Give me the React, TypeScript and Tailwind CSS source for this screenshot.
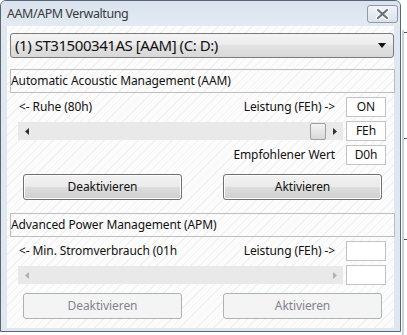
import React from "react"

const font = "font-['Noto_Sans',sans-serif] tracking-[-0.1px]"

function ValueBox({ value }: { value?: string }) {
    return (
        <div className="w-[40px] h-[20px] border border-[#c3c3c3] bg-white flex items-center justify-center text-[12px] text-[#111]">
            {value}
        </div>
    )
}

function Arrow({ dir, disabled }: { dir: "l" | "r"; disabled?: boolean }) {
    return (
        <div className="w-[17px] h-full flex items-center justify-center">
            <svg width="4" height="7" viewBox="0 0 4 7">
                {dir === "l" ? (
                    <path d="M4 0 L0 3.5 L4 7 Z" fill={disabled ? "#b0b0b0" : "#303030"} />
                ) : (
                    <path d="M0 0 L4 3.5 L0 7 Z" fill={disabled ? "#b0b0b0" : "#303030"} />
                )}
            </svg>
        </div>
    )
}

function ScrollBar({ thumb, disabled }: { thumb?: boolean; disabled?: boolean }) {
    return (
        <div className="w-[325px] h-[18px] bg-[#e9e9e9] flex items-stretch">
            <Arrow dir="l" disabled={disabled} />
            <div className="flex-1 flex items-center justify-end">
                {thumb && (
                    <div className="w-[16px] h-[17px] rounded-[2px] border border-[#9f9f9f] bg-gradient-to-b from-[#f4f4f4] to-[#d8d8d8]" />
                )}
            </div>
            <Arrow dir="r" disabled={disabled} />
        </div>
    )
}

function Button({ label, disabled }: { label: string; disabled?: boolean }) {
    return disabled ? (
        <div className="w-[159px] h-[26px] rounded-[3px] border border-[#adb2b5] bg-[#f4f4f4] flex items-center justify-center text-[12px] text-[#838390]">
            {label}
        </div>
    ) : (
        <div className="w-[159px] h-[26px] rounded-[3px] border border-[#707070] bg-[linear-gradient(#f2f2f2_0%,#ebebeb_50%,#dddddd_50%,#cfcfcf_100%)] shadow-[inset_0_0_0_1px_#fcfcfc] flex items-center justify-center text-[12px] text-[#111]">
            {label}
        </div>
    )
}

function GroupHeader({ title }: { title: string }) {
    return (
        <div className="w-[385px] h-[24px] ml-[3px] border border-[#bdbdbd] flex items-center text-[12px] text-[#111] leading-none">
            {title}
        </div>
    )
}

export default function App() {
    return (
        <div className={`w-[407px] h-[335px] bg-white flex overflow-hidden ${font}`}>
            {/* Window */}
            <div className="w-[403px] h-[332px] border border-[#5b6573] rounded-t-[6px] bg-[#dfe7f0] flex flex-col overflow-hidden">
                {/* Title bar */}
                <div className="h-[25px] flex justify-between bg-gradient-to-b from-[#d9e3ee] to-[#e3eaf2]">
                    <span className="pl-[6px] pt-[4px] text-[12.5px] tracking-[-0.45px] text-[#3a3a3a]">AAM/APM Verwaltung</span>
                    <div className="mr-[2px] mt-[4px] w-[31px] h-[18px] rounded-[3px] border border-[#8d9aa9] bg-gradient-to-b from-[#f1f4f8] to-[#d9e1ea] flex items-center justify-center">
                        <svg width="15" height="12" viewBox="0 0 15 12">
                            <path d="M3 2 L12 10 M12 2 L3 10" stroke="#ffffff" strokeWidth="4.5" strokeLinecap="round" />
                            <path d="M3 2 L12 10 M12 2 L3 10" stroke="#69737f" strokeWidth="2.2" strokeLinecap="round" />
                        </svg>
                    </div>
                </div>

                {/* Client area */}
                <div className="flex-1 mx-[6px] mb-[3px] bg-[repeating-linear-gradient(135deg,#fcfcfc_0px,#fcfcfc_5px,#f1f1f1_5px,#f1f1f1_6px)] flex flex-col text-[#111]">
                    {/* Drive dropdown */}
                    <div className="mt-[7px] ml-[3px] w-[384px] h-[25px] rounded-[3px] border border-[#7c7c7c] bg-[linear-gradient(#f4f4f4_0%,#ececec_50%,#e2e2e2_50%,#d8d8d8_100%)] flex items-center justify-between pl-[4px] pr-[7px]">
                        <span className="text-[15px] tracking-[-0.45px] text-[#111]">(1) ST31500341AS [AAM] (C: D:)</span>
                        <svg width="8" height="5" viewBox="0 0 8 5">
                            <path d="M0 0 L8 0 L4 5 Z" fill="#111" />
                        </svg>
                    </div>

                    {/* AAM */}
                    <div className="mt-[11px]">
                        <GroupHeader title="Automatic Acoustic Management (AAM)" />
                    </div>
                    <div className="mt-[4px] ml-[11px] flex items-center text-[12px]">
                        <span className="w-[217px] pl-[1px]">&lt;- Ruhe (80h)</span>
                        <span className="w-[100px] text-right whitespace-nowrap">Leistung (FEh) -&gt;</span>
                        <div className="ml-[11px]">
                            <ValueBox value="ON" />
                        </div>
                    </div>
                    <div className="mt-[4px] ml-[11px] flex items-center">
                        <ScrollBar thumb />
                        <div className="ml-[3px]">
                            <ValueBox value="FEh" />
                        </div>
                    </div>
                    <div className="mt-[4px] ml-[11px] flex items-center text-[12px]">
                        <span className="w-[317px] text-right">Empfohlener Wert</span>
                        <div className="ml-[11px]">
                            <ValueBox value="D0h" />
                        </div>
                    </div>
                    <div className="mt-[9px] ml-[16px] flex gap-[41px]">
                        <Button label="Deaktivieren" />
                        <Button label="Aktivieren" />
                    </div>

                    {/* APM */}
                    <div className="mt-[13px]">
                        <GroupHeader title="Advanced Power Management (APM)" />
                    </div>
                    <div className="mt-[4px] ml-[11px] flex items-center text-[12px]">
                        <span className="w-[159px] pl-[1px] overflow-hidden whitespace-nowrap">&lt;- Min. Stromverbrauch (01h)</span>
                        <span className="w-[158px] text-right whitespace-nowrap">Leistung (FEh) -&gt;</span>
                        <div className="ml-[11px]">
                            <ValueBox />
                        </div>
                    </div>
                    <div className="mt-[4px] ml-[11px] flex items-center">
                        <ScrollBar disabled />
                        <div className="ml-[3px]">
                            <ValueBox />
                        </div>
                    </div>
                    <div className="mt-[8px] ml-[16px] flex gap-[41px]">
                        <Button label="Deaktivieren" disabled />
                        <Button label="Aktivieren" disabled />
                    </div>
                </div>
            </div>

            {/* Edge of the window behind */}
            <div className="flex-1 flex flex-col pt-[30px]">
                <div className="flex-1 border-l-[2px] border-[#c6d3e0] ml-[1px] flex flex-col">
                    <div className="mt-[2px] h-[1px] w-[3px] bg-[#555]" />
                    <div className="mt-[105px] h-[1px] w-[3px] bg-[#555]" />
                    <div className="mt-[100px] h-[1px] w-[3px] bg-[#555]" />
                </div>
            </div>
        </div>
    )
}
